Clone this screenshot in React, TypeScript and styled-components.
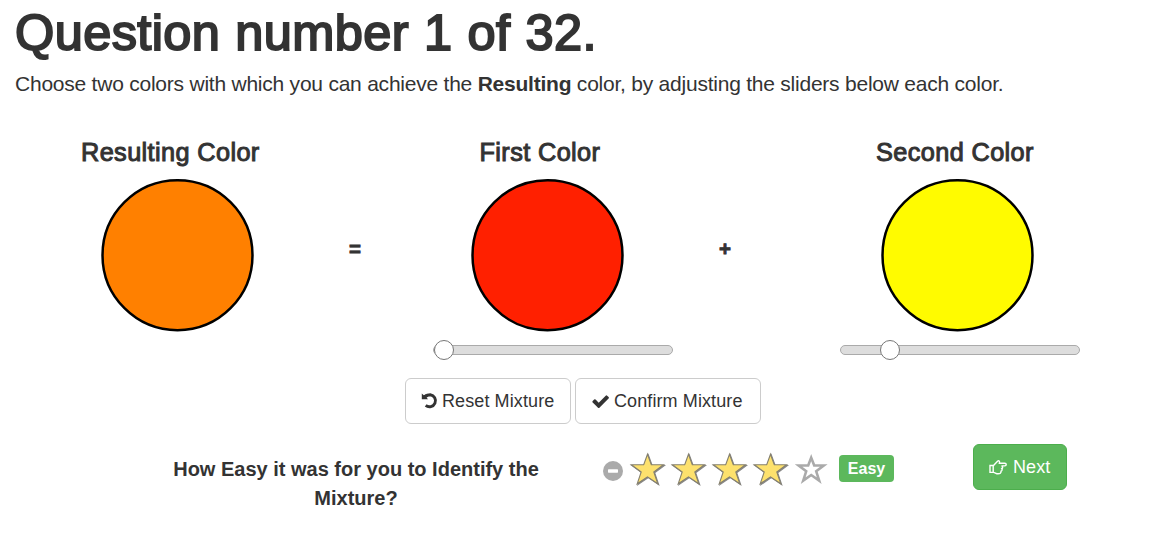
import React from "react";
import styled, { createGlobalStyle } from "styled-components";

const Global = createGlobalStyle`
  * { box-sizing: border-box; }
  body {
    margin: 0;
    background: #fff;
    color: #333;
    font-family: "Liberation Sans", Arial, sans-serif;
    overflow: hidden;
  }
`;

const Page = styled.main`
  width: 1166px;
  height: 536px;
  overflow: hidden;
  padding: 5px 0 0 15px;
`;

const Title = styled.h1`
  margin: 0;
  font-size: 50.5px;
  line-height: 56px;
  font-weight: 400;
  letter-spacing: 0.4px;
  word-spacing: 0.6px;
  -webkit-text-stroke: 2px #333;
  white-space: nowrap;
`;

const Intro = styled.p`
  margin: 8px 0 0;
  font-size: 21px;
  line-height: 30px;
  letter-spacing: -0.23px;
  white-space: nowrap;
`;

const Mixer = styled.section`
  display: flex;
  margin: 38px 0 0 -15px;
  height: 221px;
`;

const Column = styled.div<{ $start: number; $width: number }>`
  margin-left: ${(p) => p.$start}px;
  width: ${(p) => p.$width}px;
  display: flex;
  flex-direction: column;
`;

const Caption = styled.h4<{ $shift: number }>`
  margin: 0 0 11px ${(p) => p.$shift}px;
  font-size: 25.3px;
  line-height: 31px;
  font-weight: 400;
  letter-spacing: 0.38px;
  -webkit-text-stroke: 1px #333;
  white-space: nowrap;
`;

const SwatchSvg = styled.svg<{ $shift: number }>`
  display: block;
  width: 153px;
  height: 153px;
  margin-left: ${(p) => p.$shift}px;
  flex: none;
  overflow: visible;
`;

const Operator = styled.div<{ $start: number }>`
  margin-left: ${(p) => p.$start}px;
  width: 20px;
  padding-top: 97px;
  font-size: 20.5px;
  line-height: 30px;
  font-weight: 700;
  -webkit-text-stroke: 0.8px #333;
  text-align: center;
`;

const Track = styled.div`
  width: 240px;
  height: 10px;
  margin-top: 13px;
  flex: none;
  display: flex;
  align-items: center;
  border: 1px solid #aaa;
  border-radius: 5px;
  background: #ddd;
`;

const Thumb = styled.span<{ $offset: number }>`
  width: 20px;
  height: 20px;
  flex: none;
  margin-left: ${(p) => p.$offset}px;
  border: 1px solid #777;
  border-radius: 50%;
  background: #fff;
`;

const Actions = styled.div`
  display: flex;
  gap: 4px;
  margin: 20px 0 0 390px;
`;

const Button = styled.button<{ $width: number; $primary?: boolean }>`
  width: ${(p) => p.$width}px;
  height: 46px;
  padding: 0 0 0 15px;
  display: flex;
  align-items: center;
  border: 1px solid ${(p) => (p.$primary ? "#4cae4c" : "#ccc")};
  border-radius: 6px;
  background: ${(p) => (p.$primary ? "#5cb85c" : "#fff")};
  color: ${(p) => (p.$primary ? "#fff" : "#333")};
  font: 18px "Liberation Sans", Arial, sans-serif;
  letter-spacing: 0.1px;
  white-space: nowrap;
  flex: none;
`;

const Icon = styled.svg<{ $gap: number }>`
  display: block;
  flex: none;
  margin-right: ${(p) => p.$gap}px;
  fill: currentColor;
`;

const Survey = styled.div`
  display: flex;
  margin: 20px 0 0 142px;
`;

const Question = styled.label`
  width: 398px;
  padding-top: 11px;
  text-align: center;
  font-size: 20px;
  line-height: 29px;
  font-weight: 700;
`;

const Rating = styled.div`
  display: flex;
  align-items: flex-start;
  margin-left: 48px;
  width: 370px;
`;

const Clear = styled(Icon)`
  margin-top: 17px;
  color: #aaa;
`;

const Stars = styled.div`
  display: flex;
  padding-top: 8px;
`;

const StarSvg = styled.svg`
  display: block;
  width: 41px;
  height: 38px;
`;

const Badge = styled.span`
  height: 27px;
  width: 55px;
  margin: 11px 0 0 5px;
  border-radius: 4px;
  background: #5cb85c;
  color: #fff;
  text-align: center;
  font-size: 16px;
  line-height: 27px;
  font-weight: 700;
`;

const STAR = "M18.500 2.200L22.300 12.700H34.500L24.800 20L28.800 31.800L18.500 24.800L8.200 31.800L12.200 20L2.300 12.700H14.700Z";

function Swatch({ color, shift }: { color: string; shift: number }) {
  return (
    <SwatchSvg $shift={shift} viewBox="0 0 153 153">
      <circle cx="76.500" cy="76.200" r="75" fill={color} stroke="#000" strokeWidth="2.500" />
    </SwatchSvg>
  );
}

function Star({ filled }: { filled: boolean }) {
  return (
    <StarSvg viewBox="0 0 41 38">
      {filled ? (
        <>
          <path d={STAR} transform="translate(.8 .8)" fill="#888" stroke="#888" strokeWidth="1.200" />
          <path d={STAR} fill="#fde16d" stroke="#85806f" strokeWidth="1.100" />
        </>
      ) : (
        <path
          d="M18.200 5.600L21.200 13.500H30.800L23.200 19.300L26.200 28.600L18.200 23L10.200 28.600L13.200 19.300L5.600 13.500H15.200Z"
          fill="none"
          stroke="#aaa"
          strokeWidth="2.600"
        />
      )}
    </StarSvg>
  );
}

export default function App() {
  return (
    <>
      <Global />
      <Page>
        <Title>Question number 1 of 32.</Title>
        <Intro>
          Choose two colors with which you can achieve the <b>Resulting</b> color, by adjusting the
          sliders below each color.
        </Intro>
        <Mixer>
          <Column $start={80} $width={240}>
            <Caption $shift={1}>Resulting Color</Caption>
            <Swatch color="#ff8000" shift={21} />
          </Column>
          <Operator $start={25}>=</Operator>
          <Column $start={68} $width={240}>
            <Caption $shift={46.5}>First Color</Caption>
            <Swatch color="#ff2000" shift={38} />
            <Track>
              <Thumb $offset={-0.5} />
            </Track>
          </Column>
          <Operator $start={42}>+</Operator>
          <Column $start={105} $width={240}>
            <Caption $shift={36}>Second Color</Caption>
            <Swatch color="#fffb00" shift={41} />
            <Track>
              <Thumb $offset={39} />
            </Track>
          </Column>
        </Mixer>
        <Actions>
          <Button $width={166}>
            <Icon $gap={4} width="17" height="16" viewBox="0 0 17 16">
              <path d="M0.800 0.500L2.800 2.300L5 1.300L7.200 3.700L5.500 4.500L7 6.300H0.800Z" />
              <path
                d="M3.800 3.700C5.500 2.300 7 1.800 9.300 1.800A6 6 0 1 1 4.700 12.400"
                fill="none"
                stroke="currentColor"
                strokeWidth="2.900"
              />
            </Icon>
            Reset Mixture
          </Button>
          <Button $width={186}>
            <Icon $gap={5} width="18" height="13" viewBox="0 300 1671 1222">
              <path d="M1671 566q0 40-28 68l-724 724-136 136q-28 28-68 28t-68-28l-136-136-362-362q-28-28-28-68t28-68l136-136q28-28 68-28t68 28l294 295 656-657q28-28 68-28t68 28l136 136q28 28 28 68z" />
            </Icon>
            Confirm Mixture
          </Button>
        </Actions>
        <Survey>
          <Question>How Easy it was for you to Identify the Mixture?</Question>
          <Rating>
            <Clear $gap={6} width="20" height="20" viewBox="0 0 20 20">
              <circle cx="10" cy="10" r="10" />
              <rect x="5" y="8.300" width="10" height="3.400" rx=".6" fill="#fff" />
            </Clear>
            <Stars>
              <Star filled />
              <Star filled />
              <Star filled />
              <Star filled />
              <Star filled={false} />
            </Stars>
            <Badge>Easy</Badge>
          </Rating>
          <Button $width={94} $primary>
            <Icon $gap={6} width="18" height="16" viewBox="0 0 18 16" fill="none">
              <path
                d="M1 6.500H4.500L8.500 2.300C9.800 1 11 2.200 10.400 4.200H15.800C17.700 4.200 17.700 6.900 15.800 6.900H12.500C14.200 7.600 13.800 9.300 12.800 9.500C13.500 10.500 13 12 12 12.200C12.300 14.200 11 14.800 9 14.800C7 14.800 6 13.400 4.500 13.400H1Z M4.200 6.500V13.400"
                fill="none"
                stroke="#fff"
                strokeWidth="1.400"
              />
            </Icon>
            Next
          </Button>
        </Survey>
      </Page>
    </>
  );
}
